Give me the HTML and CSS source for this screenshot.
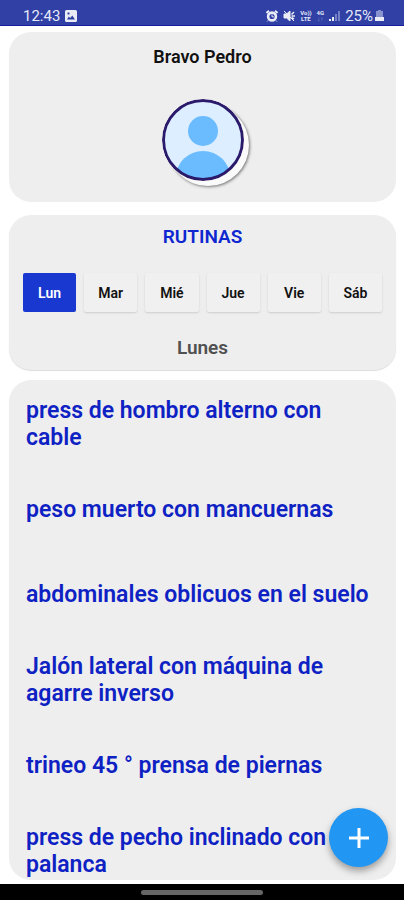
FILE: index.html
```html
<!DOCTYPE html>
<html lang="es">
<head>
<meta charset="utf-8">
<meta name="viewport" content="width=device-width, initial-scale=1">
<title>Rutinas</title>
<link rel="stylesheet" href="styles.css">
</head>
<body>
<header class="status">
  <span class="clock">12:43</span>
  <svg class="icon" width="12" height="12" viewBox="0 0 12 12"><path fill="#fff" fill-rule="evenodd" d="M1.5 0h9Q12 0 12 1.500v9Q12 12 10.500 12h-9Q0 12 0 10.500v-9Q0 0 1.500 0zM2 9.500h8L7.300 5.500 5.200 8 3.800 6.600zM2.500 2.500v2h2v-2z"/></svg>
  <span class="spacer"></span>
  <svg class="icon" width="12" height="12" viewBox="0 0 12 12"><path d="M.5 3 3 .8M11.500 3 9 .8" stroke="#fff" stroke-width="2"/><circle cx="6" cy="6.500" r="3.900" fill="#3040a4" stroke="#fff" stroke-width="2.600"/><path d="M6 4.500v2.300h1.800M2 10.500l-.8 1M10 10.500l.8 1" fill="none" stroke="#fff"/></svg>
  <svg class="icon" width="12" height="12" viewBox="0 0 12 12"><path d="M1 4h2.500L7 1v10L3.500 8H1zM1 1l10 10" fill="#fff" stroke="#fff"/><path d="M8.500 4.500 11 2M8.500 6H12M8.500 7.500 11 9" stroke="#fff" stroke-width="1.500"/></svg>
  <span class="net">Vo))<br>LTE</span>
  <span class="net">4G<br><span class="dim">↓↑</span></span>
  <svg class="icon" width="11" height="12" viewBox="0 0 11 12"><path d="M0 9h2v2H0zM3 7h2v4H3z" fill="#fff"/><path d="M6 4h2v7H6zM9 1h2v10H9z" fill="#7d88cb"/></svg>
  <span class="battery">25%<svg class="icon" width="9" height="12" viewBox="0 0 9 12"><path d="M3 0h3v1h2v7H1V1h2z" fill="#929bd4"/><path d="M0 7h9v4H0z" fill="#fff"/></svg></span>
</header>

<main class="screen">
  <section class="card profile">
    <h1 class="name">Bravo Pedro</h1>
    <svg class="avatar" width="82" height="82" viewBox="0 0 82 82" role="img" aria-label="Foto de perfil">
      <clipPath id="face"><circle cx="41" cy="41" r="39"/></clipPath>
      <circle cx="41" cy="41" r="39" fill="#dceeff"/>
      <g clip-path="url(#face)" fill="#6bbcff"><circle cx="41" cy="32" r="15"/><ellipse cx="41" cy="78" rx="27" ry="26"/></g>
      <circle cx="41" cy="41" r="39.500" fill="none" stroke="#2b1a6b" stroke-width="3"/>
    </svg>
  </section>

  <section class="card routines">
    <h2 class="title">RUTINAS</h2>
    <div class="days">
      <button class="day selected" type="button">Lun</button>
      <button class="day" type="button">Mar</button>
      <button class="day" type="button">Mié</button>
      <button class="day" type="button">Jue</button>
      <button class="day" type="button">Vie</button>
      <button class="day" type="button">Sáb</button>
    </div>
    <h3 class="current">Lunes</h3>
  </section>

  <section class="card exercises">
    <ul class="list">
      <li class="item">press de hombro alterno con cable</li>
      <li class="item tall">peso muerto con mancuernas</li>
      <li class="item">abdominales oblicuos en el suelo</li>
      <li class="item">Jalón lateral con máquina de agarre inverso</li>
      <li class="item">trineo 45 ° prensa de piernas</li>
      <li class="item">press de pecho inclinado con palanca</li>
    </ul>
  </section>
  <button class="add" type="button" aria-label="Agregar">
    <svg width="20" height="20" viewBox="0 0 20 20"><path d="M10 0v20M0 10h20" stroke="#fff" stroke-width="3"/></svg>
  </button>
</main>
<footer class="navbar"><span class="handle"></span></footer>
</body>
</html>
```
FILE: styles.css
```css
* { box-sizing: border-box; }

body {
  margin: 0;
  height: 100vh;
  display: flex;
  flex-direction: column;
  background: #fff;
  font-family: Roboto, "Liberation Sans", sans-serif;
}

h1, h2, h3, ul { margin: 0; padding: 0; }

.status {
  display: flex;
  align-items: center;
  gap: 5px;
  height: 26px;
  padding: 6px 20px 0 23px;
  background: #3040a4;
  border-bottom: 1px solid #1420a0;
  color: #e6e9fa;
  font-size: 15px;
  line-height: 18px;
}

.icon { flex: none; opacity: 0.9; }
.spacer { flex: 1; }

.net {
  font-size: 6px;
  font-weight: 700;
  line-height: 6px;
  text-align: center;
}

.dim { opacity: 0.5; }

.battery {
  display: flex;
  align-items: center;
  gap: 2px;
}

.screen {
  position: relative;
  flex: 1;
  min-height: 0;
  display: flex;
  flex-direction: column;
  padding: 6px 8px 4px 9px;
}

.card {
  background: #eee;
  border-radius: 22px;
}

.profile {
  display: flex;
  flex-direction: column;
  align-items: center;
  gap: 31px;
  height: 170px;
  margin-bottom: 13px;
  padding-top: 14px;
}

.name {
  font-size: 18px;
  font-weight: 600;
  line-height: 22px;
  color: #111;
}

.avatar {
  border-radius: 50%;
  box-shadow: 5px 5px 0 #fafafa, 6px 6px 3px #777;
}

.routines {
  height: 155px;
  margin-bottom: 10px;
  padding: 10px 14px 0;
  text-align: center;
  box-shadow: 0 1px 1px #ddd;
}

.title {
  font-size: 19px;
  font-weight: 600;
  line-height: 24px;
  color: #0f27d0;
}

.days {
  display: grid;
  grid-template-columns: repeat(6, 1fr);
  gap: 8px;
  margin: 24px 0;
}

.day {
  height: 39px;
  padding: 0;
  border: 0;
  border-radius: 2px;
  background: #f0f0f0;
  box-shadow: 0 1px 2px #ccc;
  color: #111;
  font: 600 14px Roboto, "Liberation Sans", sans-serif;
}

.day.selected {
  background: #1838cf;
  box-shadow: none;
  color: #fff;
}

.current {
  font-size: 19px;
  font-weight: 600;
  line-height: 24px;
  color: #505050;
}

.exercises {
  flex: 1;
  min-height: 0;
  overflow: hidden;
  padding: 17px 16px 0 17px;
}

.list { list-style: none; }

.item {
  padding-bottom: 45px;
  font-size: 23px;
  font-weight: 600;
  line-height: 27px;
  color: #0e22c4;
}

.item.tall { padding-bottom: 58px; }

.add {
  position: absolute;
  right: 16px;
  bottom: 17px;
  display: grid;
  place-items: center;
  width: 59px;
  height: 59px;
  padding: 0;
  border: 0;
  border-radius: 50%;
  background: #2196f3;
  box-shadow: 0 4px 7px rgba(0, 0, 0, 0.35);
}

.navbar {
  display: flex;
  justify-content: center;
  align-items: center;
  height: 16px;
  background: #000;
}

.handle {
  width: 30%;
  height: 5px;
  border-radius: 3px;
  background: #666;
}
```
